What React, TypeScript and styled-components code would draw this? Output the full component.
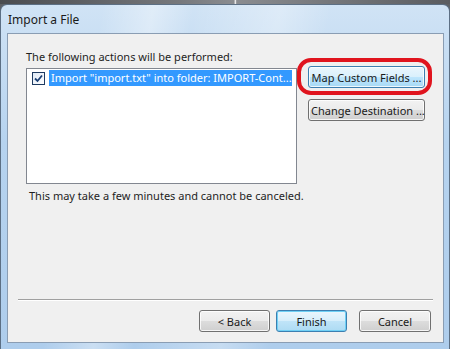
import styled, { createGlobalStyle } from "styled-components";

const Global = createGlobalStyle`
    html, body {
        margin: 0;
        padding: 0;
        background: #5e6166;
    }
    body {
        font-family: "Noto Sans", "Open Sans", sans-serif;
        font-size: 11px;
        color: #1e1e1e;
    }
`;

const Backdrop = styled.div`
    width: 450px;
    height: 349px;
    padding-top: 4px;
    box-sizing: border-box;
    background: linear-gradient(90deg, #4a4c50 0%, #76787c 40%, #8a8c90 52%, #f4f4f4 52.3%, #8a8c90 52.6%, #5a5c60 100%) top / 100% 4px no-repeat, #5e6166;
    overflow: hidden;
`;

const Window = styled.div`
    height: 345px;
    border-radius: 7px 7px 0 0;
    border: 1px solid #5c6f84;
    border-bottom: none;
    box-sizing: border-box;
    background:
        linear-gradient(100deg, rgba(255,255,255,0) 20%, rgba(255,255,255,0.35) 30%, rgba(255,255,255,0) 38%, rgba(255,255,255,0.3) 55%, rgba(255,255,255,0) 65%),
        linear-gradient(180deg, #d0e3f5 0%, #b6d3ef 40%, #aecdec 100%);
    display: flex;
    flex-direction: column;
    padding: 0 5px 6px 6px;
`;

const TitleBar = styled.div`
    height: 28px;
    display: flex;
    align-items: center;
    padding-left: 1px;
    font-family: "Noto Sans", sans-serif;
    font-size: 12px;
    color: #1a1a1a;
`;

const Client = styled.div`
    flex: 1;
    background: #f0f0f0;
    border: 1px solid #8a9db3;
    display: flex;
    flex-direction: column;
    padding: 15px 0 0 0;
`;

const Body = styled.div`
    padding: 0 0 0 18px;
    flex: 1;
`;

const Label = styled.div`
    font-size: 11px;
    line-height: 16px;
    margin-bottom: 3px;
    white-space: nowrap;
`;

const Row = styled.div`
    display: flex;
    align-items: flex-start;
    gap: 11px;
`;

const ListBox = styled.div`
    width: 271px;
    height: 116px;
    box-sizing: border-box;
    background: #ffffff;
    border: 1px solid #828790;
    padding: 1px 4px 0 5px;
`;

const ListItem = styled.div`
    display: flex;
    align-items: center;
    gap: 4px;
    height: 16px;
`;

const Check = styled.span`
    width: 11px;
    height: 11px;
    border: 1px solid #1f3b61;
    background: linear-gradient(135deg, #dfe9f5, #ffffff);
    display: flex;
    align-items: center;
    justify-content: center;
    flex-shrink: 0;
`;

const Selected = styled.span`
    background: #3399ff;
    color: #ffffff;
    font-size: 11px;
    line-height: 16px;
    padding: 0 2px 0 2px;
    flex: 1;
    white-space: nowrap;
    overflow: hidden;
`;

const SideButtons = styled.div`
    position: relative;
    display: flex;
    flex-direction: column;
    gap: 11px;
    margin-top: -2px;
`;

const Button = styled.button<{ $variant?: "normal" | "hover" | "default"; $width?: number; $space?: number }>`
    height: 22px;
    width: ${(p) => (p.$width ? `${p.$width}px` : "auto")};
    margin-left: ${(p) => p.$space ?? 0}px;
    padding: 0 2px;
    font-family: "Noto Sans", sans-serif;
    font-size: 11px;
    color: #1a1a1a;
    border-radius: 3px;
    white-space: nowrap;
    cursor: default;
    border: 1px solid ${(p) => (p.$variant === "hover" ? "#3c7fb1" : p.$variant === "default" ? "#3c7fb1" : "#707070")};
    background: ${(p) =>
        p.$variant === "hover"
            ? "linear-gradient(180deg, #eaf6fd 0%, #d9f0fc 50%, #bee6fd 50%, #a7d9f5 100%)"
            : p.$variant === "default"
            ? "linear-gradient(180deg, #eaf6fd 0%, #d6eefb 50%, #c0e4f8 50%, #addbf3 100%)"
            : "linear-gradient(180deg, #f2f2f2 0%, #ebebeb 50%, #dddddd 50%, #cfcfcf 100%)"};
    box-shadow: inset 0 0 0 1px ${(p) => (p.$variant === "default" ? "#6fd0f5" : "rgba(255,255,255,0.8)")};
`;

const Highlight = styled.div`
    position: absolute;
    left: -11px;
    top: -8px;
    width: 135px;
    height: 37px;
    border: 4px solid #e0141e;
    border-radius: 14px;
    box-sizing: border-box;
    pointer-events: none;
`;

const Note = styled.div`
    font-size: 11px;
    line-height: 16px;
    margin: 4px 0 0 3px;
    white-space: nowrap;
`;

const Separator = styled.div`
    margin: 0 10px 0 10px;
    height: 0;
    border-top: 1px solid #a0a0a0;
    border-bottom: 1px solid #ffffff;
`;

const Footer = styled.div`
    display: flex;
    justify-content: flex-end;
    gap: 6px;
    padding: 9px 12px 10px 0;
`;

export default function App() {
    return (
        <>
            <Global />
            <Backdrop>
                <Window>
                    <TitleBar>Import a File</TitleBar>
                    <Client>
                        <Body>
                            <Label>The following actions will be performed:</Label>
                            <Row>
                                <ListBox>
                                    <ListItem>
                                        <Check>
                                            <svg width="9" height="9" viewBox="0 0 9 9">
                                                <path d="M1 4.5 L3.5 7 L8 1.5" fill="none" stroke="#1b3f74" strokeWidth="1.8" />
                                            </svg>
                                        </Check>
                                        <Selected>Import "import.txt" into folder: IMPORT-Cont...</Selected>
                                    </ListItem>
                                </ListBox>
                                <SideButtons>
                                    <Highlight />
                                    <Button $variant="hover" $width={117}>Map Custom Fields ...</Button>
                                    <Button $width={117}>Change Destination ...</Button>
                                </SideButtons>
                            </Row>
                            <Note>This may take a few minutes and cannot be canceled.</Note>
                        </Body>
                        <Separator />
                        <Footer>
                            <Button $width={71}>&lt; Back</Button>
                            <Button $variant="default" $width={71}>Finish</Button>
                            <Button $width={72} $space={6}>Cancel</Button>
                        </Footer>
                    </Client>
                </Window>
            </Backdrop>
        </>
    );
}
